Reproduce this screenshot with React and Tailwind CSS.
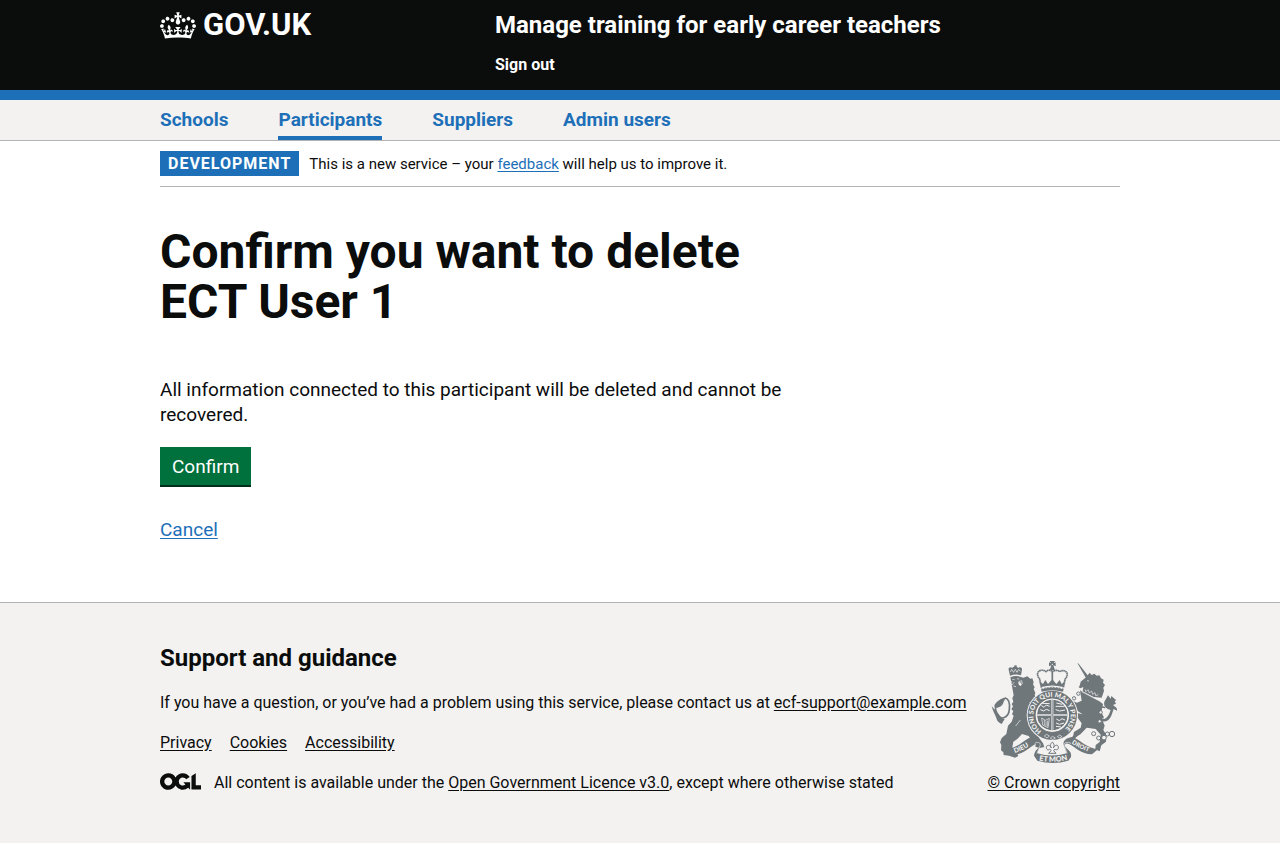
function Crown() {
  return (
    <svg aria-hidden="true" focusable="false" viewBox="0 0 132 97" className="h-[27px] w-9 shrink-0" fill="currentColor">
      <path
        fillRule="evenodd"
        d="M25 30.2c3.5 1.5 7.7-.2 9.1-3.7 1.5-3.6-.2-7.8-3.9-9.2-3.6-1.4-7.6.3-9.1 3.9-1.4 3.5.3 7.5 3.9 9zM9 39.5c3.6 1.5 7.8-.2 9.2-3.7 1.5-3.6-.2-7.8-3.9-9.1-3.6-1.5-7.6.2-9.1 3.8-1.4 3.5.3 7.5 3.8 9zM4.4 57.2c3.5 1.5 7.7-.2 9.1-3.8 1.5-3.6-.2-7.7-3.9-9.1-3.5-1.5-7.6.3-9.1 3.8-1.4 3.5.3 7.6 3.9 9.1zm38.3-21.4c3.5 1.5 7.7-.2 9.1-3.8 1.5-3.6-.2-7.7-3.9-9.1-3.6-1.5-7.6.3-9.1 3.8-1.3 3.6.4 7.7 3.9 9.1zm64.4-5.6c-3.6 1.5-7.8-.2-9.1-3.7-1.5-3.6.2-7.8 3.8-9.2 3.6-1.4 7.7.3 9.2 3.9 1.3 3.5-.4 7.5-3.9 9zm15.9 9.3c-3.6 1.5-7.7-.2-9.1-3.7-1.5-3.6.2-7.8 3.7-9.1 3.6-1.5 7.7.2 9.2 3.8 1.5 3.5-.3 7.5-3.8 9zm4.7 17.7c-3.6 1.5-7.8-.2-9.2-3.8-1.5-3.6.2-7.7 3.9-9.1 3.6-1.5 7.7.3 9.2 3.8 1.3 3.5-.4 7.6-3.9 9.1zM89.3 35.8c-3.6 1.5-7.8-.2-9.2-3.8-1.4-3.6.2-7.7 3.9-9.1 3.6-1.5 7.7.3 9.2 3.8 1.4 3.6-.3 7.7-3.9 9.1zM69.7 17.7l8.9 4.7V9.3l-8.9 2.8c-.2-.3-.5-.6-.9-.9L72.4 0H59.6l3.5 11.2c-.3.3-.6.5-.9.9l-8.8-2.8v13.1l8.8-4.7c.3.3.6.7.9.9l-5 15.4v.1c-.2.8-.4 1.6-.4 2.4 0 4.1 3.1 7.5 7 8.1h.2c.3 0 .7.1 1 .1.4 0 .7 0 1-.1h.2c4-.6 7.1-4.1 7.1-8.1 0-.8-.1-1.7-.4-2.4V34l-5.1-15.4c.4-.2.7-.6 1-.9zM66 92.8c16.9 0 32.8 1.1 47.1 3.2 4-16.9 8.9-26.7 14-33.5l-9.6-3.4c1 4.9 1.1 7.2 0 10.2-1.5-1.4-3-4.3-4.2-8.7L108.6 76c2.8-2 5-3.2 7.5-3.3-4.4 9.4-10 11.9-13.6 11.2-4.3-.8-6.3-4.6-5.6-7.9 1-4.7 5.7-5.9 8-.5 4.3-8.7-3-11.4-7.6-8.8 7.1-7.2 7.9-13.5 2.1-21.1-8 6.1-8.1 12.3-4.5 20.8-4.7-5.4-12.1-2.5-9.5 6.2 3.4-5.2 7.9-2 7.2 3.1-.6 4.3-6.4 7.8-13.5 7.2-10.3-.9-10.9-8-11.2-13.8 2.5-.5 7.1 1.8 11 7.3L80.2 60c-4.1 4.4-8 5.3-12.3 5.4 1.4-4.4 8-11.6 8-11.6H55.5s6.4 7.2 7.9 11.6c-4.2-.1-8-1-12.3-5.4l1.4 16.4c3.9-5.5 8.5-7.7 10.9-7.3-.3 5.8-.9 12.8-11.1 13.8-7.2.6-12.9-2.9-13.5-7.2-.7-5 3.8-8.3 7.1-3.1 2.7-8.7-4.6-11.6-9.4-6.2 3.7-8.5 3.6-14.7-4.6-20.8-5.8 7.6-5 13.9 2.2 21.1-4.7-2.6-11.9.1-7.7 8.8 2.3-5.5 7.1-4.2 8.1.5.7 3.3-1.3 7.1-5.7 7.9-3.5.7-9-1.8-13.5-11.2 2.5.1 4.7 1.3 7.5 3.3l-4.7-15.4c-1.2 4.4-2.7 7.2-4.3 8.7-1.1-3-.9-5.3 0-10.2l-9.5 3.4c5 6.9 9.9 16.7 14 33.5 14.8-2.1 30.8-3.2 47.7-3.2z"
      />
    </svg>
  );
}

function OglLogo() {
  return (
    <svg aria-hidden="true" focusable="false" viewBox="0 0 483.2 195.7" className="h-[17px] w-[41px] shrink-0" fill="currentColor">
      <path d="M421.5 142.8V.1l-50.7 32.3v161.1h112.4v-50.7zm-122.3-9.6A47.12 47.12 0 0 1 221 97.8c0-26 21.1-47.1 47.1-47.1 16.7 0 31.4 8.7 39.7 21.8l42.7-27.2A97.63 97.63 0 0 0 268.1 0c-36.5 0-68.3 20.1-85.1 49.7A98 98 0 0 0 97.8 0C43.9 0 0 43.9 0 97.8s43.9 97.8 97.8 97.8c36.5 0 68.3-20.1 85.1-49.7a97.76 97.76 0 0 0 149.6 25.4l19.4 22.2h3v-87.8h-80l24.3 27.5zM97.8 145c-26 0-47.1-21.1-47.1-47.1s21.1-47.1 47.1-47.1 47.1 21.1 47.1 47.1S123.8 145 97.8 145" />
    </svg>
  );
}

const INK = "#6f777b";
const PAPER = "#f3f2f1";

function RoyalArms() {
  return (
    <svg aria-hidden="true" focusable="false" viewBox="64 30 378 312" className="h-[104px] w-[126px]" fontFamily="Lato, sans-serif" fontWeight="900">
      {/* lion */}
      <g fill={INK}>
        <path d="M121 77l-4-18c-2-7 7-10 11-5 2-6 15-6 17 0 5-5 13-2 12 5l-3 17q-16-6-33 1z" />
        <path d="M134 46h7v6h-7z" />
        <path d="M122 82q16-7 32-1l7 2 12-4 9 7 6-1 4 12-2 6 5 9-3 5 5 12-2 6 6 14-3 6 5 9-2 6 7 9 3 9 12 4 2 10-13-2 4 9-11-5-9 4-7-10-7 8-1 25 13 7 11 21 15 21 4 11-14 3-13-4 1-8-9-6-12-18-20-6-14 15-12 8-3 17 13 15 5 11-10 5-18-6-16-2-1-8-7-6 1-16-4-8 5-13 14-12 5-25 11-12 6-18-5-4 4-10-6-5 5-9-4-7 5-7-3-10 4-9z" />
        <path d="M96 222c-8-3-14-8-16-18-4-11-10-19-14-35l10 10-2-12c4-11 20-22 35-25l-7 13c-2 11-12 18-22 18 0 12 7 18 11 25 2 8 8 10 14 9z" />
      </g>
      <path d="M84 194c9 19 33 9 35-16 2-17 0-31-13-34" fill="none" stroke={INK} strokeWidth="5" />
      <path d="M122 66l4-8 6 9 5-9 5 9 5-9 5 6" fill="none" stroke={PAPER} strokeWidth="2" />
      <path d="M128 88l7 1M142 86l7 1M127 93l-5 9 6 2 5-7M147 95l9-3 2 9-5 6-5-4zM131 108l8 2" fill="none" stroke={PAPER} strokeWidth="2" />
      <path d="M147 96l8 2-1 9-6-2z" fill={PAPER} />
      <path d="M180 156l8 14M152 210l-14 18" fill="none" stroke={PAPER} strokeWidth="2" />

      {/* unicorn */}
      <g fill={INK}>
        <path d="M323 39l4 2 34 44-9 4z" />
        <path d="M330 107l3-12 16-13 11-14 6 7 8-4 7 6 8-1 5 9 8 4-2 9 6 7-5 8 2 10-7 20-24-2-33-17 2-13-9 4-5-3z" />
        <path d="M331 121l56 31 13 10-5 24 6 13-4 9 8 19-4 13 9 15-1 20-14 11-5 18-13-6 1-13 12-9 3-22-15-17-27-4-18 19-10 7-17 15-10 2-1-8 15-9 3-13 20-13 3-13-12-17-19-5-14-10-5-13 10-7 11 2 8-4 5 6-9 7 8 9 20 5-14-9-10-11-24-5 5-12 13-3 13 5 14-6z" />
        <path d="M392 204l12 3c13-6 15-18 19-27-16-4-22-13-19-25l11-19 8 10 2-8 15 13-5 2 4 8-9 4 10 8 4 10-12-6-7 20c-6 14-17 20-29 17z" />
      </g>
      <path d="M402 202c-13-2-18-17-9-28 4-5 9-3 13-1" fill="none" stroke={INK} strokeWidth="5" />
      <path d="M336 125l50 26M346 118l3 7 6-6 4 10 7-6 3 10 7-5 2 9 8-3M352 92l6 1" fill="none" stroke={PAPER} strokeWidth="2" />
      <g fill={PAPER} stroke={INK} strokeWidth="3">
        <circle cx="326" cy="131" r="5" />
        <circle cx="313" cy="145" r="5" />
        <circle cx="393" cy="187" r="5" />
        <circle cx="390" cy="214" r="5" />
        <circle cx="372" cy="251" r="6" />
        <circle cx="387" cy="264" r="6" />
        <circle cx="403" cy="263" r="7" />
        <circle cx="413" cy="252" r="6" />
        <circle cx="427" cy="252" r="8" />
      </g>

      {/* garter and shield */}
      <circle cx="248" cy="196" r="77" fill={PAPER} />
      <circle cx="248" cy="196" r="62" fill="none" stroke={INK} strokeWidth="24" />
      <circle cx="248" cy="195" r="46" fill={INK} />
      <circle cx="248" cy="195" r="48" fill="none" stroke={PAPER} strokeWidth="3" />
      <g fill="none" stroke={PAPER}>
        <path d="M248 149v92M202 195h92" strokeWidth="6" />
        <path d="M215 166l8 6 7-7 10 4M212 179l10 4 8-5 10 4M218 160l22 1M260 159l18 4M258 169h27M258 179l12 4 16-3M260 207l9 5 8-6 9 4M259 219l10 4 14-4M259 229l15 2" strokeWidth="3" />
        <path d="M216 204l3 21 16 8 4-28-12 6zM224 210v16M229 214v14M234 212v17" strokeWidth="2" />
        <path d="M224 258l7-5 8 5-7 6zM242 264l7-5 8 5-8 5zM263 260l7-5 7 5-7 4z" strokeWidth="2" />
      </g>
      <path d="M248 149v92M202 195h92" stroke={INK} strokeWidth="2" />
      <path id="garter" d="M216 243A56 56 0 1 1 282 240" fill="none" />
      <text fontSize="20" fill={PAPER}>
        <textPath href="#garter">HONI SOIT QUI MAL Y PENSE</textPath>
      </text>

      {/* royal crown */}
      <path d="M215 113l-5-26c-18-22 6-33 19-22 7-7 15-5 19 1 6-6 15-7 21-1 15-9 34 3 17 23l-5 25" fill={PAPER} stroke={INK} strokeWidth="5" strokeDasharray="5 1" />
      <path d="M248 66v30" stroke={INK} strokeWidth="5" />
      <path d="M215 111l-6-17 11 8 7-12 8 12 13-14 12 14 10-12 6 12 11-8-6 17q-33-9-66 0z" fill={INK} />
      <path d="M214 116q34-11 68 0l-2 9q-32-9-64 0z" fill={INK} />
      <path d="M219 116q29-9 58 0" fill="none" stroke={PAPER} strokeWidth="3" strokeDasharray="5 4" />
      <path d="M240 33h16l-4 7 6-3v12l-7-3 5 15h-16l5-15-7 3V37l6 3z" fill={INK} />
      <circle cx="248" cy="43" r="2" fill={PAPER} />

      {/* ribbon */}
      <path d="M110 297c30-2 46-20 68-33 22-7 40 8 33 25l-8 21q44 13 88 0l-8-22c-7-17 12-30 32-24 20 8 35 30 70 34l-18 15c-34-1-50-22-69-31-9-4-15 0-11 8 7 11 20 12 17 31l-8 11q-46 14-93 0l-10-15c2-20 17-20 17-31-3-8-12-5-16-2-22 13-37 30-60 29z" fill={INK} />
      <path d="M195 280c14-7 20 1 15 10l-8 20M304 280c-17-8-24 1-19 10l7 20" fill="none" stroke={PAPER} strokeWidth="2" />
      <path id="ribbon-left" d="M135 309q27-8 55-29" fill="none" />
      <path id="ribbon-middle" d="M207 331q41 9 86-1" fill="none" />
      <path id="ribbon-right" d="M306 280q26 18 62 29" fill="none" />
      <g fontSize="20" fill={PAPER}>
        <text><textPath href="#ribbon-left">DIEU</textPath></text>
        <text fontSize="22"><textPath href="#ribbon-middle" startOffset="1">ET MON</textPath></text>
        <text fontSize="18"><textPath href="#ribbon-right">DROIT</textPath></text>
      </g>
      {/* fleur-de-lis */}
      <path d="M248 276c8 8 5 13 3 18 5-12 17-10 15 0-1 7-8 6-10 3l-4 5 7 8h-22l7-8-4-5c-4 5-10 2-10-4 0-9 11-10 15 1-3-6-5-11 3-18z" fill={PAPER} stroke={INK} strokeWidth="3" />
    </svg>
  );
}

const NAV = [
  { label: "Schools", current: false },
  { label: "Participants", current: true },
  { label: "Suppliers", current: false },
  { label: "Admin users", current: false },
];

const CONTAINER = "mx-auto w-full max-w-[960px]";

export default function App() {
  return (
    <div className="min-h-screen bg-[#f3f2f1] font-[Roboto,Arial,sans-serif] text-base leading-5 text-[#0b0c0c]">
      <header className="border-b-10 border-[#1d70b8] bg-[#0b0c0c] font-bold text-white">
        <div className={`${CONTAINER} flex pt-2.5 pb-[15px]`}>
          <div className="w-[335px] shrink-0">
            <a href="#" className="inline-flex h-[30px] items-center gap-[7px]">
              <Crown />
              <span className="text-[31px] leading-[30px]">GOV.UK</span>
            </a>
          </div>
          <div className="flex flex-col items-start gap-[15px]">
            <a href="#" className="text-2xl leading-[30px]">Manage training for early career teachers</a>
            <nav aria-label="Account">
              <a href="#" className="block">Sign out</a>
            </nav>
          </div>
        </div>
      </header>

      <nav aria-label="Primary" className="border-b border-[#b1b4b6]">
        <ul className={`${CONTAINER} flex gap-[50px]`}>
          {NAV.map((item) => (
            <li key={item.label}>
              <a
                href="#"
                aria-current={item.current ? "page" : undefined}
                className={`block h-10 border-b-4 pt-2 text-[19px] leading-6 font-bold text-[#1d70b8] ${item.current ? "border-[#1d70b8]" : "border-transparent"}`}
              >
                {item.label}
              </a>
            </li>
          ))}
        </ul>
      </nav>

      <div className="border-b border-[#b1b4b6] bg-white">
        <div className={CONTAINER}>
          <p className="flex items-center gap-2.5 border-b border-[#b1b4b6] py-2.5">
            <strong className="bg-[#1d70b8] px-2 pt-[3px] pb-0.5 font-bold tracking-[1px] text-white uppercase">Development</strong>
            <span className="text-[15px]">
              This is a new service – your <a href="#" className="text-[#1d70b8] underline underline-offset-2">feedback</a> will help us to improve it.
            </span>
          </p>

          <main className="pt-10 pb-[60px]">
            <div className="max-w-[630px] text-[19px] leading-[25px]">
              <h1 className="mb-[50px] text-5xl leading-[50px] font-bold">Confirm you want to delete ECT User 1</h1>
              <p className="mb-5">All information connected to this participant will be deleted and cannot be recovered.</p>
              <button type="button" className="mb-[30px] block h-10 border-b-2 border-[#002d18] bg-[#00703c] px-3 text-white">
                Confirm
              </button>
              <a href="#" className="block w-fit text-[#1d70b8] underline underline-offset-2">Cancel</a>
            </div>
          </main>
        </div>
      </div>

      <footer>
        <div className={`${CONTAINER} flex items-end justify-between pt-10 pb-[50px]`}>
          <div>
            <h2 className="mb-5 text-2xl leading-[30px] font-bold">Support and guidance</h2>
            <p className="mb-5">
              If you have a question, or you’ve had a problem using this service, please contact us at{" "}
              <a href="mailto:ecf-support@example.com" className="underline underline-offset-2">ecf-support@example.com</a>
            </p>
            <ul className="mb-5 flex gap-[18px]">
              <li><a href="#" className="underline underline-offset-2">Privacy</a></li>
              <li><a href="#" className="underline underline-offset-2">Cookies</a></li>
              <li><a href="#" className="underline underline-offset-2">Accessibility</a></li>
            </ul>
            <div className="flex items-start gap-[13px]">
              <OglLogo />
              <span>
                All content is available under the <a href="#" className="underline underline-offset-2">Open Government Licence v3.0</a>, except where otherwise stated
              </span>
            </div>
          </div>
          <a href="#" className="flex shrink-0 flex-col items-center gap-[9px] underline underline-offset-2">
            <RoyalArms />
            <span>© Crown copyright</span>
          </a>
        </div>
      </footer>
    </div>
  );
}
